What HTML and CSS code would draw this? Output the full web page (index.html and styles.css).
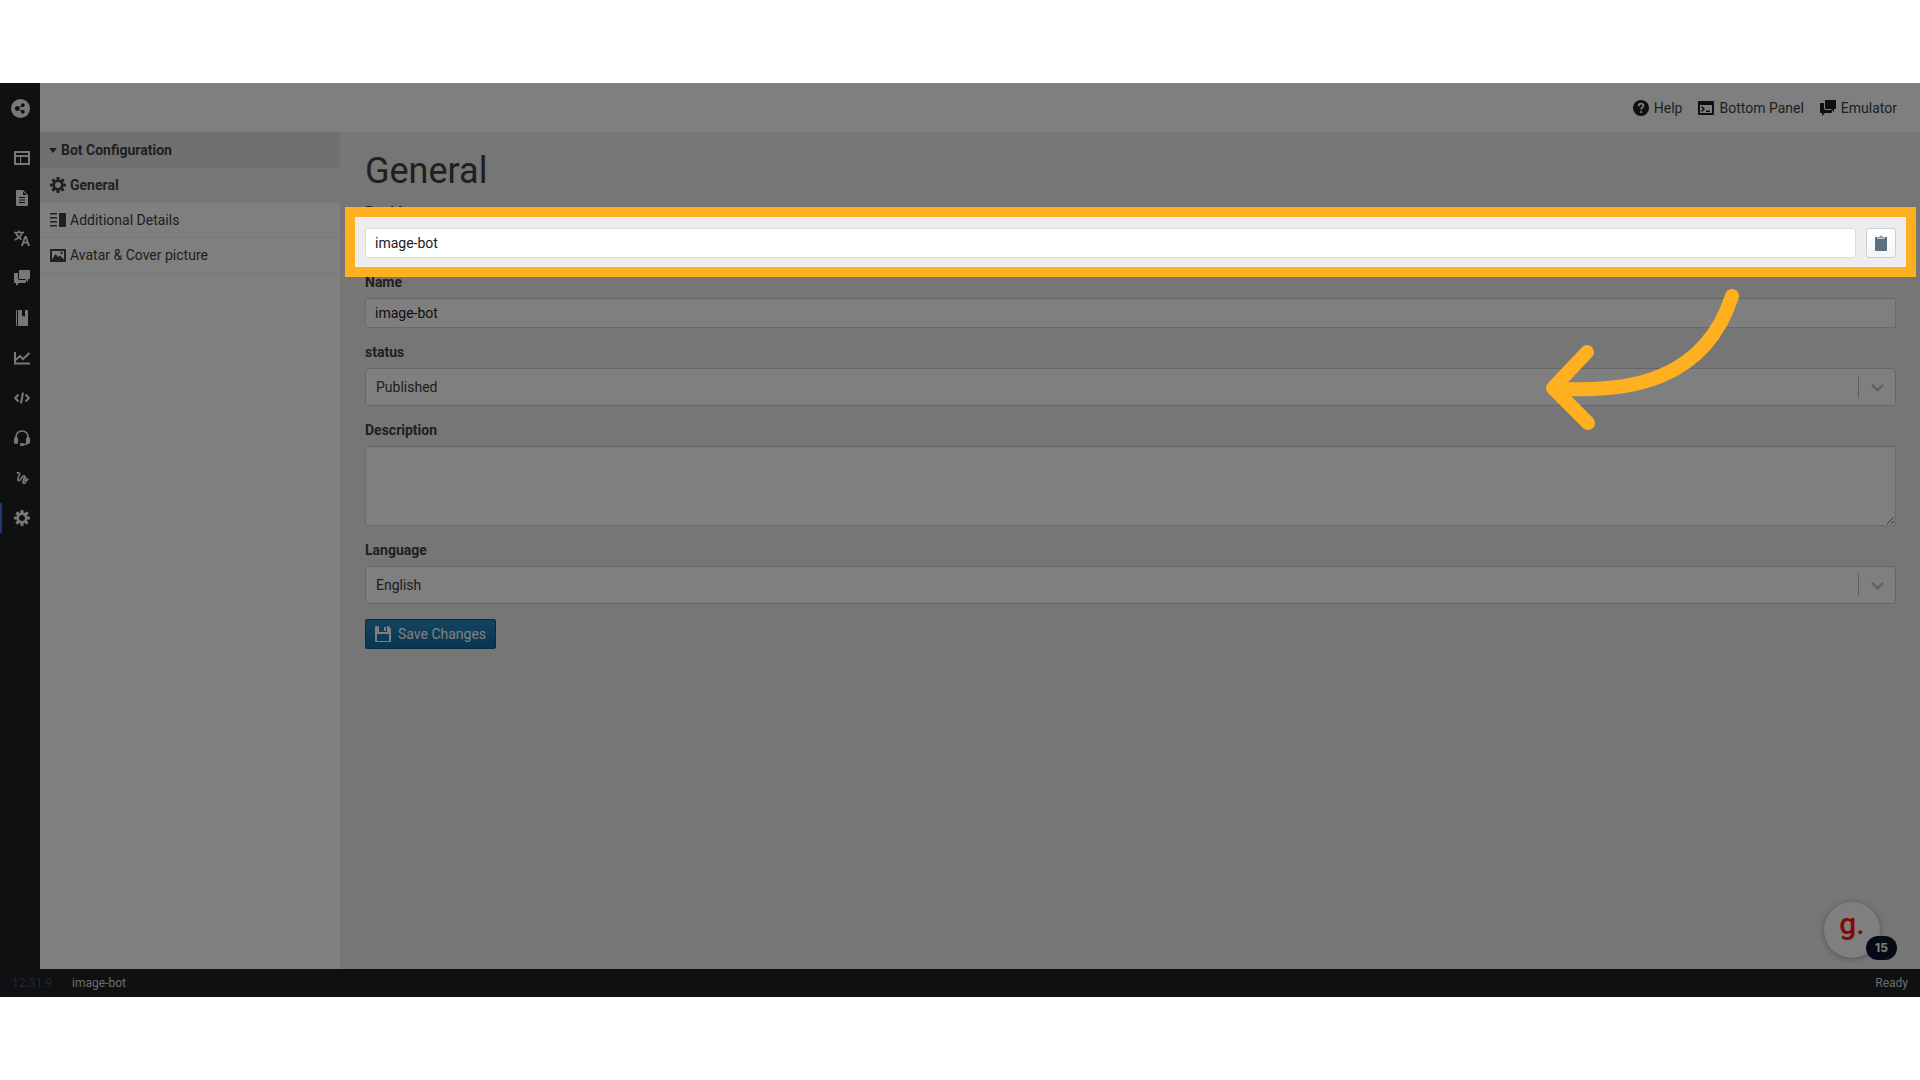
FILE: index.html
```html
<!DOCTYPE html>
<html lang="en">
<head>
    <meta charset="UTF-8">
    <meta name="viewport" content="width=device-width, initial-scale=1.0">
    <title>image-bot - Configuration</title>
    <link rel="stylesheet" href="styles.css">
</head>
<body>
    <div class="app">
        <div class="workspace">
            <nav class="rail" aria-label="Main">
                <a href="#" class="rail-logo" aria-label="Home">
                    <svg viewBox="0 0 20 20"><circle cx="10" cy="10" r="10"/><g fill="#1c2024" stroke="#1c2024"><path d="M6.500 10L12.500 6.500M6.500 10l6 3.500" stroke-width="1"/><circle cx="6.500" cy="10" r="2"/><circle cx="12.500" cy="6.500" r="1.500"/><circle cx="12.500" cy="13.500" r="1.500"/></g></svg>
                </a>
                <a href="#" aria-label="Flows">
                    <svg viewBox="0 0 16 16"><path fill-rule="evenodd" d="M1 1h14c.6 0 1 .4 1 1v12c0 .6-.4 1-1 1H1c-.6 0-1-.4-1-1V2c0-.6.400-1 1-1zm1 2v2h12V3zm0 4v6h4V7zm5 0v6h7V7z"/></svg>
                </a>
                <a href="#" aria-label="Content">
                    <svg viewBox="0 0 16 16"><path fill-rule="evenodd" d="M9 0H3c-.55 0-1 .45-1 1v14c0 .55.45 1 1 1h10c.55 0 1-.45 1-1V5zm0 1.500L12.500 5H9zM5 7h6v1H5zm0 2.500h6v1H5zM5 12h6v1H5z"/></svg>
                </a>
                <a href="#" aria-label="Translations">
                    <svg viewBox="0 0 16 16"><path d="M0 2.500h10M5 .5v2M2 3c1 3 3 5 5.500 6.500M8 3C7 6 4 8.500.5 10" fill="none" stroke="currentColor" stroke-width="1.700"/><path fill-rule="evenodd" d="M10.500 6h2L16 16h-2l-.8-2.500h-3.400L9 16H7zm1 2.500l-1.100 3.300h2.200z"/></svg>
                </a>
                <a href="#" aria-label="Conversations">
                    <svg viewBox="0 0 16 16"><path d="M6 10c-1.100 0-2-.9-2-2V3H1c-.55 0-1 .45-1 1v8c0 .55.45 1 1 1h1v3l3-3h6c.55 0 1-.45 1-1v-1.020L11.980 10H6zm9-10H6c-.55 0-1 .45-1 1v7c0 .55.45 1 1 1h5l3 3V9h1c.55 0 1-.45 1-1V1c0-.55-.45-1-1-1z"/></svg>
                </a>
                <a href="#" aria-label="Library">
                    <svg viewBox="0 0 16 16"><path d="M2 1c0-.6.400-1 1-1v16c-.6 0-1-.4-1-1zM4 0h4v7l1.500-1.500L11 7V0h2c.6 0 1 .4 1 1v14c0 .6-.4 1-1 1H4z"/></svg>
                </a>
                <a href="#" aria-label="Analytics">
                    <svg viewBox="0 0 16 16"><path d="M1 2v11.500h15M1.500 10L6 6l3 3 6.500-6" fill="none" stroke="currentColor" stroke-width="2"/></svg>
                </a>
                <a href="#" aria-label="Code">
                    <svg viewBox="0 0 16 16"><path d="M4.500 4.500L1.200 8l3.300 3.500M11.500 4.500L14.800 8l-3.300 3.500M9 2.500L7 13.500" fill="none" stroke="currentColor" stroke-width="2"/></svg>
                </a>
                <a href="#" aria-label="Agents">
                    <svg viewBox="0 0 16 16"><path d="M2 8C2 3.500 4.500 1 8 1s6 2.500 6 7M14 11c0 2.500-2 3.500-4 3.500" fill="none" stroke="currentColor" stroke-width="1.500"/><rect y="7" width="4" height="7" rx="1.800"/><rect x="12" y="7" width="4" height="7" rx="1.800"/><rect x="6" y="13" width="4" height="3" rx="1.200"/></svg>
                </a>
                <a href="#" aria-label="Misunderstood">
                    <svg viewBox="0 0 16 16"><path d="M3 3.500c1-1.500 3-1 2.500 1L4 8c-.8 2.500 1 3.500 2.500 1.500C8 7 9 5 10.500 6s-1 4-1.500 5.500 1 2.500 2 1.500 2-5 .5-5.500-3 2.500-1 3 3-.5 4-1.500" fill="none" stroke="currentColor" stroke-width="1.600"/></svg>
                </a>
                <a href="#" class="active" aria-label="Configuration">
                    <svg viewBox="0 0 16 16"><use href="#cog"/></svg>
                </a>
            </nav>

            <div class="main">
                <header class="topbar">
                    <button type="button">
                        <svg viewBox="0 0 16 16"><circle cx="8" cy="8" r="8"/><path d="M5.600 6.200c0-3.500 5.200-3.300 4.800-.3C10.200 7.500 8.200 7.500 8 9.500" fill="none" stroke="#fff" stroke-width="1.700"/><circle cx="8" cy="12" r="1.100" fill="#fff"/></svg>
                        Help
                    </button>
                    <button type="button">
                        <svg viewBox="0 0 16 16"><path fill-rule="evenodd" d="M1 1h14c.6 0 1 .4 1 1v12c0 .6-.4 1-1 1H1c-.6 0-1-.4-1-1V2c0-.6.400-1 1-1zm1 4v8h12V5z"/><path d="M3.500 6.500L6 9l-2.500 2.500M8 11.300h4" fill="none" stroke="currentColor" stroke-width="1.500"/></svg>
                        Bottom Panel
                    </button>
                    <button type="button">
                        <svg viewBox="0 0 16 16"><path d="M6 10c-1.100 0-2-.9-2-2V3H1c-.55 0-1 .45-1 1v8c0 .55.45 1 1 1h1v3l3-3h6c.55 0 1-.45 1-1v-1.020L11.980 10H6zm9-10H6c-.55 0-1 .45-1 1v7c0 .55.45 1 1 1h5l3 3V9h1c.55 0 1-.45 1-1V1c0-.55-.45-1-1-1z"/></svg>
                        Emulator
                    </button>
                </header>

                <div class="body">
                    <aside class="sidebar">
                        <button type="button" class="section"><span class="caret"></span>Bot Configuration</button>
                        <a href="#" class="selected">
                            <svg viewBox="0 0 16 16"><path id="cog" d="M15.190 6.390h-1.850c-.11-.37-.27-.71-.45-1.040l1.360-1.360c.31-.31.31-.82 0-1.130l-1.130-1.130a.803.803 0 00-1.130 0l-1.360 1.360c-.33-.17-.67-.33-1.040-.44V.79c0-.44-.36-.8-.8-.8h-1.600c-.44 0-.8.36-.8.8v1.860c-.39.12-.75.28-1.100.47l-1.300-1.300c-.3-.3-.79-.3-1.090 0L1.820 2.910c-.3.3-.3.79 0 1.090l1.300 1.300c-.2.34-.36.7-.48 1.090H.79c-.44 0-.8.36-.8.8v1.600c0 .44.36.8.8.8h1.850c.11.37.27.71.45 1.040l-1.360 1.360c-.31.31-.31.82 0 1.130l1.130 1.130c.31.31.82.31 1.130 0l1.360-1.360c.33.18.67.33 1.040.44v1.860c0 .44.36.8.8.8h1.600c.44 0 .8-.36.8-.8v-1.860c.39-.12.75-.28 1.100-.47l1.300 1.300c.3.3.79.3 1.090 0l1.090-1.090c.3-.3.3-.79 0-1.090l-1.300-1.300c.19-.35.36-.71.48-1.100h1.850c.44 0 .8-.36.8-.8v-1.600a.816.816 0 00-.81-.79zm-7.200 4.600c-1.660 0-3-1.340-3-3s1.340-3 3-3 3 1.340 3 3-1.340 3-3 3z"/></svg>
                            General
                        </a>
                        <a href="#">
                            <svg viewBox="0 0 16 16"><path d="M0 1h7v1.500H0zm0 4h7v1.500H0zm0 4h7v1.500H0zm0 4h7v1.500H0zM10 1h5c.6 0 1 .4 1 1v12c0 .6-.4 1-1 1h-5c-.6 0-1-.4-1-1V2c0-.6.400-1 1-1z"/></svg>
                            Additional Details
                        </a>
                        <a href="#">
                            <svg viewBox="0 0 16 16"><path fill-rule="evenodd" d="M1 2h14c.6 0 1 .4 1 1v11c0 .6-.4 1-1 1H1c-.6 0-1-.4-1-1V3c0-.6.400-1 1-1zm1 2v8.500L5.500 7l2.500 3 2-1.500 4 4V4z"/><circle cx="11.500" cy="6" r="1.200"/></svg>
                            Avatar &amp; Cover picture
                        </a>
                    </aside>

                    <main class="content">
                        <h1>General</h1>
                        <form>
                            <div class="field">
                                <label for="botId">Bot Id</label>
                                <div class="copy-row">
                                    <input type="text" id="botId" value="image-bot">
                                    <button type="button" class="copy" aria-label="Copy bot id">
                                        <svg viewBox="0 0 16 16"><path d="M3 2h1.500v2h7V2H13c.6 0 1 .4 1 1v12c0 .6-.4 1-1 1H3c-.6 0-1-.4-1-1V3c0-.6.400-1 1-1z"/><path d="M5 2h1.500a1.500 1.500 0 013 0H11v1.500H5z" opacity=".7"/></svg>
                                    </button>
                                    <div class="spotlight"></div>
                                    <svg class="arrow" viewBox="0 0 195 142"><path d="M187 8C160 92 85 106 8 100M42 64L8 100l35 35"/></svg>
                                </div>
                            </div>
                            <div class="field">
                                <label for="name">Name</label>
                                <input type="text" id="name" value="image-bot">
                            </div>
                            <div class="field">
                                <label for="status">status</label>
                                <div class="select">
                                    <select id="status">
                                        <option>Published</option>
                                    </select>
                                    <svg viewBox="0 0 20 20"><path d="M5 8l5 5 5-5"/></svg>
                                </div>
                            </div>
                            <div class="field">
                                <label for="description">Description</label>
                                <textarea id="description"></textarea>
                            </div>
                            <div class="field">
                                <label for="language">Language</label>
                                <div class="select">
                                    <select id="language">
                                        <option>English</option>
                                    </select>
                                    <svg viewBox="0 0 20 20"><path d="M5 8l5 5 5-5"/></svg>
                                </div>
                            </div>
                            <button type="submit" class="save">
                                <svg viewBox="0 0 16 16"><path fill-rule="evenodd" d="M15.710 2.290l-2-2A.997.997 0 0013 0h-1v6H4V0H1C.45 0 0 .45 0 1v14c0 .55.45 1 1 1h14c.55 0 1-.45 1-1V3c0-.28-.11-.53-.29-.71zM14 15H2V9c0-.55.45-1 1-1h10c.55 0 1 .45 1 1v6zM11 1H9v4h2V1z"/></svg>
                                Save Changes
                            </button>
                        </form>
                    </main>
                </div>
            </div>
        </div>

        <footer class="statusbar">
            <span class="version">12.31.9</span>
            <span>image-bot</span>
            <span class="ready">Ready</span>
        </footer>

        <button type="button" class="widget">g.<span class="badge">15</span></button>
    </div>
</body>
</html>
```

FILE: styles.css
```css
* {
    box-sizing: border-box;
}

body {
    margin: 0;
    padding: 83px 0;
    min-height: 100vh;
    display: flex;
    background-color: #ffffff;
    font-family: Roboto, sans-serif;
    font-size: 14px;
    line-height: 18px;
    color: #404040;
}

button,
input,
select,
textarea {
    font: inherit;
    color: inherit;
}

button {
    border: none;
    background: none;
    padding: 0;
    cursor: pointer;
}

a {
    color: inherit;
    text-decoration: none;
}

svg {
    display: block;
    width: 16px;
    height: 16px;
    flex: none;
    fill: currentColor;
}

.app {
    position: relative;
    flex: 1;
    display: flex;
    flex-direction: column;
    overflow: hidden;
    isolation: isolate;
}

.workspace {
    flex: 1;
    display: flex;
}

/* icon rail */
.rail {
    width: 40px;
    background-color: #1c2024;
    color: #f0f0f0;
}

.rail a {
    display: flex;
    align-items: center;
    height: 30px;
    margin-bottom: 10px;
    padding-left: 12px;
    border-left: 2px solid transparent;
}

.rail .rail-logo {
    height: 50px;
    padding-left: 9px;
}

.rail-logo svg {
    width: 19px;
    height: 19px;
}

.rail .active {
    border-left-color: #3272e0;
}

.main {
    flex: 1;
    display: flex;
    flex-direction: column;
    min-width: 0;
}

.topbar {
    display: flex;
    justify-content: flex-end;
    align-items: center;
    gap: 16px;
    height: 49px;
    padding-right: 23px;
    background-color: #ffffff;
}

.topbar button {
    display: flex;
    align-items: center;
    gap: 5px;
}

.topbar svg {
    color: #182026;
}

.body {
    flex: 1;
    display: flex;
}

/* sidebar */
.sidebar {
    width: 300px;
    background-color: #ffffff;
}

.sidebar a,
.section {
    display: flex;
    align-items: center;
    gap: 4px;
    width: 100%;
    height: 35px;
    padding: 0 10px;
    border-bottom: 1px solid #f2f2f2;
}

.sidebar .section {
    height: 36px;
    padding-left: 9px;
    border-bottom: none;
    background-color: #dee0e4;
    font-weight: bold;
}

.caret {
    border: 4px solid transparent;
    border-top: 5px solid #404040;
    border-bottom: none;
}

.sidebar .selected {
    background-color: #ededed;
    font-weight: bold;
}

/* form */
.content {
    flex: 1;
    padding: 21px 24px 20px 25px;
    background-color: #ededed;
}

h1 {
    margin: 0 0 14px;
    font-size: 36px;
    line-height: 36px;
    font-weight: normal;
}

.field {
    margin-bottom: 15px;
}

label {
    display: block;
    margin-bottom: 7px;
    font-weight: bold;
}

input,
textarea,
select {
    display: block;
    width: 100%;
    border: 1px solid #d5d5d5;
    border-radius: 3px;
    background-color: #ffffff;
}

input,
textarea {
    height: 30px;
    padding: 0 9px;
    color: #182026;
    border-top-color: #c8c8c8;
}

textarea {
    height: 80px;
}

select {
    height: 38px;
    padding: 0 10px;
    appearance: none;
    border-color: #cccccc;
    border-radius: 4px;
}

.select {
    position: relative;
}

.select svg {
    position: absolute;
    top: 8px;
    right: 0;
    width: 38px;
    height: 22px;
    border-left: 1px solid #bbbbbb;
    fill: none;
    stroke: #bbbbbb;
    stroke-width: 2;
    pointer-events: none;
}

.copy-row {
    position: relative;
    display: flex;
    gap: 10px;
}

.copy-row input {
    border-color: #dddddd;
}

.copy {
    display: flex;
    align-items: center;
    justify-content: center;
    width: 30px;
    height: 30px;
    flex: none;
    border: 1px solid #cdd0d3;
    border-radius: 3px;
    background: linear-gradient(#ffffff, #f2f6f9);
    color: #5c7080;
}

/* dims the whole app except for the highlighted row */
.spotlight {
    position: absolute;
    inset: -21px -20px -19px;
    z-index: 2;
    border: 10px solid #ffb020;
    box-shadow: 0 0 0 9999px rgba(0, 0, 0, 0.5);
    pointer-events: none;
}

.arrow {
    position: absolute;
    top: 60px;
    right: 156px;
    z-index: 3;
    width: 195px;
    height: 142px;
    fill: none;
    stroke: #ffb020;
    stroke-width: 14;
    stroke-linecap: round;
    stroke-linejoin: round;
    pointer-events: none;
}

.save {
    display: flex;
    align-items: center;
    gap: 7px;
    height: 30px;
    padding: 0 10px;
    border-radius: 3px;
    background: linear-gradient(#2a8ac0, #106ba3);
    box-shadow: inset 0 0 0 1px #0e5a8a;
    color: #ffffff;
}

.statusbar {
    display: flex;
    align-items: center;
    gap: 20px;
    height: 28px;
    padding: 0 12px;
    background-color: #1c2024;
    color: #d8d8d8;
    font-size: 12px;
}

.version {
    color: #45505c;
}

.ready {
    margin-left: auto;
}

/* floating help bubble */
.widget {
    position: absolute;
    right: 40px;
    bottom: 39px;
    width: 56px;
    height: 56px;
    padding-bottom: 12px;
    border-radius: 50%;
    background-color: #ffffff;
    box-shadow: 0 1px 6px rgba(0, 0, 0, 0.3);
    color: #ff1010;
    font-size: 30px;
    font-weight: 500;
}

.badge {
    position: absolute;
    right: -17px;
    bottom: -2px;
    width: 31px;
    height: 24px;
    border-radius: 12px;
    background-color: #0d1528;
    color: #ffffff;
    font-family: Inter, sans-serif;
    font-size: 12px;
    font-weight: bold;
    line-height: 24px;
}
```
